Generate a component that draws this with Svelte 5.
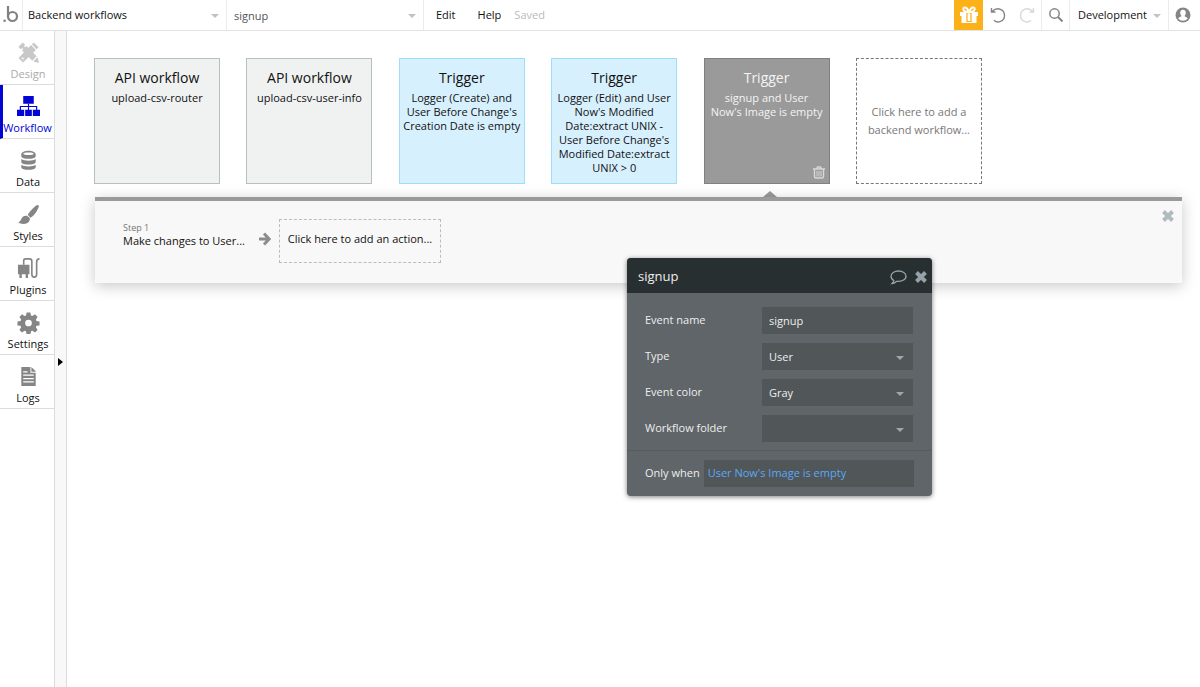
<script>
  const tabs = ['Design', 'Workflow', 'Data', 'Styles', 'Plugins', 'Settings', 'Logs'];
  const workflows = [
    { kind: 'API workflow', text: 'upload-csv-router', color: 'plain' },
    { kind: 'API workflow', text: 'upload-csv-user-info', color: 'plain' },
    { kind: 'Trigger', text: "Logger (Create) and User Before Change's Creation Date is empty", color: 'cyan' },
    { kind: 'Trigger', text: "Logger (Edit) and User Now's Modified Date:extract UNIX - User Before Change's Modified Date:extract UNIX > 0", color: 'cyan' },
    { kind: 'Trigger', text: "signup and User Now's\u00a0Image is empty", color: 'gray' },
  ];

  let tab = $state('Workflow');
  let selected = $state(4);
  let eventName = $state('signup');
  let type = $state('User');
  let color = $state('Gray');
  let folder = $state('');
</script>

{#snippet cross()}
  <svg class="cross" viewBox="0 0 12 12" aria-hidden="true">
    <path d="M1.500 1.500 10.500 10.500M10.500 1.500 1.500 10.500" stroke="currentColor" stroke-width="4" />
  </svg>
{/snippet}

{#snippet tabIcon(name)}
  <svg class="tab-icon" viewBox="0 0 24 24" fill="currentColor" aria-hidden="true">
    {#if name === 'Design'}
      <path d="M1.500 6 6 1.500 8.500 4 7.300 5.500 8.300 6.500 9.800 5.300 20.500 16 16 20.500 5.300 9.800 6.500 8.300 5.500 7.300 4 8.500z" />
      <path d="M17.500 1.500 22.500 6.500 20.500 8.500 15.500 3.500zM14.700 4.300 19.700 9.300 15.800 13.200 10.800 8.200zM8 11l5 5-5.200 5.200-1.800-1.800 1.300-1.300-1.200-1.200-1.300 1.300-1.800-1.800z" />
      <path d="M1.500 17.800 3 16.300 7.700 21 6.200 22.500zM17 21.500 21.500 17 23 23z" />
    {:else if name === 'Workflow'}
      <path d="M6.500 1h11v8h-11zM0 15.500h7.500V22H0zM8.500 15.500h7V22h-7zM16.500 15.500H24V22h-7.500z" />
      <path d="M12 9v7M3.500 16v-4h17v4" fill="none" stroke="currentColor" stroke-width="1.200" />
    {:else if name === 'Data'}
      <path fill-rule="evenodd" d="M4.500 5.500c0-5 15-5 15 0v2c0 3.600-15 3.600-15 0zM6.500 5c0 1.800 11 1.800 11 0s-11-1.800-11 0z" />
      <path d="M4.500 10.500c3 2.400 12 2.400 15 0v3c0 3.600-15 3.600-15 0zM4.500 16.500c3 2.400 12 2.400 15 0v2.500c0 3.600-15 3.600-15 0z" />
    {:else if name === 'Styles'}
      <path d="M22.500 2.300c-.9-.9-2.500.2-4 1.500-3 2.700-6.500 6.500-7.300 8.700l3 3c3-1.600 7.300-7.500 8.300-11 .3-.9.300-1.700 0-2.200zM10.200 13.300c-2.500-.4-4.700.8-5.500 3-.6 1.700-1.500 3.300-3.400 3.900 3 2.700 10 2.500 11.700-1.600.6-1.500.5-2.700-.1-3.400z" />
    {:else if name === 'Plugins'}
      <path d="M1 8h12v10H1zM2.500 18h2.500v4H2.500zM9 18h2.500v4H9z" />
      <path d="M7 8V4q0-2 2-2h4q2.500 0 2.500 2.500V18q0 3 2.500 3t2.500-3V5q0-3 3-3" fill="none" stroke="currentColor" stroke-width="1.700" />
    {:else if name === 'Settings'}
      <path fill-rule="evenodd" d="m10 1.500 4 0 .6 3.200 1.500.6 2.700-1.800 2.700 2.700-1.800 2.700.6 1.500 3.200.6v4l-3.200.5-.6 1.500 1.800 2.700-2.700 2.700-2.700-1.800-1.500.6-.6 3.200h-4l-.6-3.200-1.500-.6-2.700 1.800-2.700-2.700 1.800-2.700-.6-1.500-3.200-.5v-4l3.200-.6.6-1.500-1.800-2.700 2.700-2.700 2.700 1.800 1.500-.6zM12 9a3.500 3.500 0 1 0 0 7 3.500 3.500 0 0 0 0-7z" />
    {:else}
      <path fill-rule="evenodd" d="M4.500 2h9.500v6h5.500v14h-15zM15 2l4.500 4.500V7H15zM6.500 6.500v1.300H11V6.500zM6.500 10v1.300h11V10zM6.500 13.500v1.300h11v-1.300zM6.500 17v1.300h11V17z" />
    {/if}
  </svg>
{/snippet}

<div class="app">
  <header class="topbar">
    <a class="logo" href="#home" aria-label="Home">
      <svg viewBox="0 0 18 20" aria-hidden="true">
        <circle cx="10.500" cy="11.500" r="4.500" fill="none" stroke="#828282" stroke-width="2.200" />
        <path d="M6 1v11" stroke="#828282" stroke-width="2.200" />
        <circle cx="2.600" cy="15.800" r="1.300" fill="#828282" />
      </svg>
    </a>
    <div class="pick page">
      <select aria-label="Page"><option>Backend workflows</option></select>
    </div>
    <div class="pick item">
      <select aria-label="Workflow"><option>signup</option></select>
    </div>
    <nav class="menu">
      <button>Edit</button>
      <button>Help</button>
      <span class="saved">Saved</span>
    </nav>
    <div class="tools">
      <button class="gift" aria-label="Gift">
        <svg width="20" height="18" viewBox="0 0 20 18" aria-hidden="true">
          <path fill="#fff" d="M1 6h18v4H1zM2.500 9h15v8h-15z" />
          <path fill="none" stroke="#fbb117" stroke-width="1.200" d="M8 7h4v8.500H8z" />
          <path fill="none" stroke="#fff" stroke-width="1.900" d="M10 6C8 .500 4 .5 4.300 3.300c.2 1.700 2.700 2.500 5.700 2.700 3-.2 5.500-1 5.700-2.700C16 .5 12 .5 10 6z" />
        </svg>
      </button>
      <button aria-label="Undo">
        <svg width="16" height="16" viewBox="0 0 16 16" fill="none" stroke="#858585" stroke-width="1.400" aria-hidden="true">
          <path d="M2 4.500C8-1 14.500 3 14.500 8.500c0 6-7 8.300-10.500 4.800M1.500 1v4h4" />
        </svg>
      </button>
      <button aria-label="Redo">
        <svg width="16" height="16" viewBox="0 0 16 16" fill="none" stroke="#d8d8d8" stroke-width="1.400" aria-hidden="true">
          <path d="M14 4.500C8-1 1.500 3 1.500 8.500c0 6 7 8.300 10.500 4.800M14.500 1v4h-4" />
        </svg>
      </button>
      <button class="search" aria-label="Search">
        <svg width="16" height="16" viewBox="0 0 16 16" fill="none" stroke="#858585" aria-hidden="true">
          <circle cx="6.500" cy="6.500" r="4.700" stroke-width="1.500" />
          <path d="m10 10 4.500 4.500" stroke-width="2" />
        </svg>
      </button>
      <div class="pick version">
        <select aria-label="Version"><option>Development</option></select>
      </div>
      <button class="account" aria-label="Account">
        <svg width="16" height="16" viewBox="0 0 16 16" aria-hidden="true">
          <circle cx="8" cy="8" r="7.500" fill="#858585" />
          <path fill="#fff" d="M8 2.800c1.800 0 2.800 1.300 2.800 2.900 0 1.400-.5 2.500-1.300 3.100.2 1.200 2.500 1.200 3.300 2.600a5.900 5.900 0 0 1-9.600 0C4 10 6.300 10 6.500 8.800 5.700 8.200 5.200 7.100 5.200 5.700c0-1.600 1-2.900 2.800-2.900z" />
        </svg>
      </button>
    </div>
  </header>

  <div class="body">
    <nav class="tabs">
      {#each tabs as name}
        <button class="tab" class:active={tab === name} class:dim={name === 'Design'} onclick={() => (tab = name)}>
          {@render tabIcon(name)}
          <span>{name}</span>
        </button>
      {/each}
    </nav>
    <button class="gutter" aria-label="Expand">
      <svg width="5" height="8" viewBox="0 0 5 8" aria-hidden="true"><path d="M0 0 5 4 0 8z" /></svg>
    </button>

    <main>
      <div class="cards">
        {#each workflows as w, i}
          <div class="slot" class:open={selected === i}>
            <button class="card {w.color}" onclick={() => (selected = i)}>
              <span class="kind">{w.kind}</span>
              <span class="text">{w.text}</span>
            </button>
            {#if selected === i}
              <button class="trash" aria-label="Delete">
                <svg width="12" height="13" viewBox="0 0 12 13" fill="none" stroke="currentColor" aria-hidden="true">
                  <path d="M0 3h12M3.500 3l1-2h3l1 2M1.500 3v7.500q0 1.500 1.500 1.500h6q1.500 0 1.500-1.500V3" stroke-width="1.400" />
                  <path d="M4 5v5.500M6 5v5.500M8 5v5.500" />
                </svg>
              </button>
            {/if}
          </div>
        {/each}
        <button class="add">Click here to add a backend workflow...</button>
      </div>

      <section class="steps">
        <div class="step">
          <small>Step 1</small>
          <span>Make changes to User...</span>
        </div>
        <svg class="arrow" width="12" height="14" viewBox="0 0 12 14" fill="none" stroke="#8c8c8c" stroke-width="3" aria-hidden="true">
          <path d="M0 7h10M5 1.500 10.200 7 5 12.500" />
        </svg>
        <button class="add-action">Click here to add an action...</button>
        <button class="close" aria-label="Close">{@render cross()}</button>
      </section>
    </main>
  </div>

  <form class="editor">
    <div class="title">
      <h2>{eventName}</h2>
      <button type="button" aria-label="Comment">
        <svg width="17" height="15" viewBox="0 0 17 15" fill="none" stroke="currentColor" stroke-width="1.300" aria-hidden="true">
          <path d="M8.500 1C4.300 1 1 3.200 1 6.200c0 1.900 1.100 3.400 2.800 4.300-.1 1.300-.7 2.200-1.600 3 1.900-.2 3.300-1 4.200-2.200 5.100.6 9.600-1.600 9.600-5.100C16 3.200 12.700 1 8.500 1z" />
        </svg>
      </button>
      <button type="button" aria-label="Close">{@render cross()}</button>
    </div>
    <div class="fields">
      <label for="event-name">Event name</label>
      <input id="event-name" type="text" bind:value={eventName} />
      <label for="type">Type</label>
      <div class="pick">
        <select id="type" bind:value={type}><option>User</option></select>
      </div>
      <label for="color">Event color</label>
      <div class="pick">
        <select id="color" bind:value={color}>
          <option>Gray</option>
          <option>Cyan</option>
        </select>
      </div>
      <label for="folder">Workflow folder</label>
      <div class="pick">
        <select id="folder" bind:value={folder}><option value=""></option></select>
      </div>
    </div>
    <div class="condition">
      <label for="only-when">Only when</label>
      <button id="only-when" type="button">User Now's Image is empty</button>
    </div>
  </form>
</div>

<style>
  :global(body) {
    margin: 0;
    background: #fff;
  }

  .app {
    position: relative;
    display: flex;
    flex-direction: column;
    min-height: 100vh;
    font-family: 'Open Sans', 'Noto Sans', sans-serif;
    font-size: 11px;
    color: #111;
  }
  button, select, input {
    box-sizing: border-box;
    margin: 0;
    padding: 0;
    border: 0;
    border-radius: 0;
    background: none;
    font: inherit;
    color: inherit;
  }
  button, select {
    cursor: pointer;
  }
  svg {
    display: block;
  }

  /* select with its own arrow */
  .pick {
    position: relative;
    display: flex;
  }
  .pick select {
    appearance: none;
    width: 100%;
  }
  .pick::after {
    content: '';
    position: absolute;
    right: 7px;
    top: 50%;
    margin-top: -1px;
    border: 4px solid transparent;
    border-top-color: #b9c5ca;
    border-bottom: 0;
    pointer-events: none;
  }

  .topbar {
    display: flex;
    height: 30px;
    border-bottom: 1px solid #e2e2e2;
  }
  .logo {
    display: flex;
    align-items: center;
    width: 22px;
    border-right: 1px solid #e8eeee;
  }
  .logo svg {
    width: 18px;
    height: 20px;
    margin-left: 2px;
  }
  .page {
    width: 203px;
    border-right: 1px solid #e8eeee;
  }
  .page select {
    padding: 0 0 2px 5px;
  }
  .item {
    width: 196px;
    color: #555;
    border-right: 1px solid #e8eeee;
  }
  .item select {
    padding-left: 7px;
  }
  .menu {
    display: flex;
    align-items: center;
    padding: 0 0 2px 1px;
  }
  .menu button {
    height: 100%;
    padding: 0 11px;
  }
  .saved {
    padding-left: 2px;
    color: #bbb;
  }
  .tools {
    display: flex;
    margin-left: auto;
  }
  .tools button {
    display: flex;
    align-items: center;
    justify-content: center;
    width: 29px;
  }
  .tools .gift {
    background: #fbb117;
  }
  .tools .search {
    border-left: 1px solid #e8eeee;
    width: 28px;
  }
  .version {
    width: 98px;
    border: solid #e8eeee;
    border-width: 0 1px;
  }
  .version select {
    padding: 0 0 2px 8px;
  }
  .tools .account {
    width: 31px;
    padding-right: 3px;
  }

  .body {
    display: flex;
    flex: 1;
  }
  .tabs {
    width: 54px;
    border-right: 1px solid #dcdcdc;
  }
  .tab {
    display: flex;
    flex-direction: column;
    align-items: center;
    gap: 2px;
    width: 100%;
    height: 54px;
    padding: 10px 0 0 2px;
    border-bottom: 1px solid #dcdcdc;
    white-space: nowrap;
  }
  .tab-icon {
    width: 23px;
    height: 23px;
    color: #858585;
  }
  .tab.dim {
    color: #aaa;
  }
  .tab.dim .tab-icon {
    color: #c8c8c8;
  }
  .tab.active {
    padding-left: 0;
    border-left: 3px solid #0205d3;
  }
  .tab.active span {
    margin-left: -2px;
  }
  .tab.active, .tab.active .tab-icon {
    color: #0205d3;
  }
  .gutter {
    display: flex;
    align-items: center;
    width: 12px;
    padding: 5px 0 0 3px;
    border-right: 1px solid #dcdcdc;
    background: #f8f8f8;
  }

  main {
    flex: 1;
    padding: 27px 18px 0 27px;
  }
  .cards {
    display: flex;
    justify-content: space-between;
    max-width: 888px;
  }
  .slot {
    position: relative;
  }
  .card, .add {
    display: block;
    width: 126px;
    height: 126px;
  }
  .card {
    display: flex;
    flex-direction: column;
    align-items: center;
    padding: 8px 3px;
    border: 1px solid #b5c0c3;
    background: #f0f2f1;
  }
  .cyan {
    border-color: #9eddfb;
    background: #d7f0fe;
  }
  .gray {
    border-color: #808080;
    background: #9a9a9a;
    color: #f4f4f4;
  }
  .kind {
    font-size: 14px;
    line-height: 22px;
    margin-bottom: 2px;
  }
  .text {
    line-height: 14px;
  }
  .open::after {
    content: '';
    position: absolute;
    left: 59px;
    bottom: -13px;
    border: 7px solid transparent;
    border-top: 0;
    border-bottom: 6px solid #9a9a9a;
  }
  .trash {
    position: absolute;
    right: 5px;
    bottom: 5px;
    color: #d8d8d8;
  }
  .add {
    padding: 0 8px;
    border: 1px dashed #777;
    line-height: 18px;
    color: #777;
  }

  .steps {
    position: relative;
    display: flex;
    align-items: center;
    margin-top: 13px;
    margin-left: 1px;
    padding: 18px 28px 20px;
    border-top: 4px solid #9a9a9a;
    background: #f8f8f8;
    box-shadow: 0 3px 14px rgba(0, 0, 0, 0.22);
  }
  .step {
    display: flex;
    flex-direction: column;
    width: 136px;
    margin-top: -12px;
    line-height: 14px;
  }
  .step small {
    font-size: 9px;
    line-height: 12px;
    color: #777;
  }
  .arrow {
    margin: 0 8px 4px 0;
  }
  .add-action {
    width: 162px;
    height: 44px;
    padding-bottom: 5px;
    border: 1px dashed #b0c0c4;
  }
  .close {
    position: absolute;
    right: 8px;
    top: 9px;
    color: #b0bcc0;
  }
  .cross {
    width: 12px;
    height: 12px;
  }

  .editor {
    position: absolute;
    left: 627px;
    top: 258px;
    width: 305px;
    border-radius: 4px;
    overflow: hidden;
    background: #5f6568;
    color: #eee;
    box-shadow: 0 1px 5px rgba(0, 0, 0, 0.5);
  }
  .title {
    display: flex;
    align-items: center;
    gap: 8px;
    height: 35px;
    padding: 0 5px 0 11px;
    background: #282f31;
    color: #95a1a6;
  }
  .title button {
    padding-top: 3px;
  }
  .title h2 {
    flex: 1;
    margin: 0;
    font-size: 13px;
    font-weight: 400;
    color: #eee;
  }
  .fields {
    display: grid;
    grid-template-columns: 117px 1fr;
    align-items: center;
    row-gap: 9px;
    padding: 14px 19px 8px 18px;
    border-bottom: 1px solid #575c5f;
  }
  .fields label, .condition label {
    padding-bottom: 2px;
  }
  .fields input, .fields select, .condition button {
    width: 100%;
    height: 27px;
    padding: 0 7px;
    background: #515659;
  }
  .fields .pick::after {
    right: 9px;
    border-top-color: #a0a6a9;
  }
  .condition {
    display: flex;
    align-items: center;
    gap: 4px;
    padding: 9px 18px 9px;
  }
  .condition label {
    white-space: nowrap;
  }
  .condition button {
    padding: 0 4px 2px;
    text-align: left;
    color: #5aa9f5;
  }
</style>
